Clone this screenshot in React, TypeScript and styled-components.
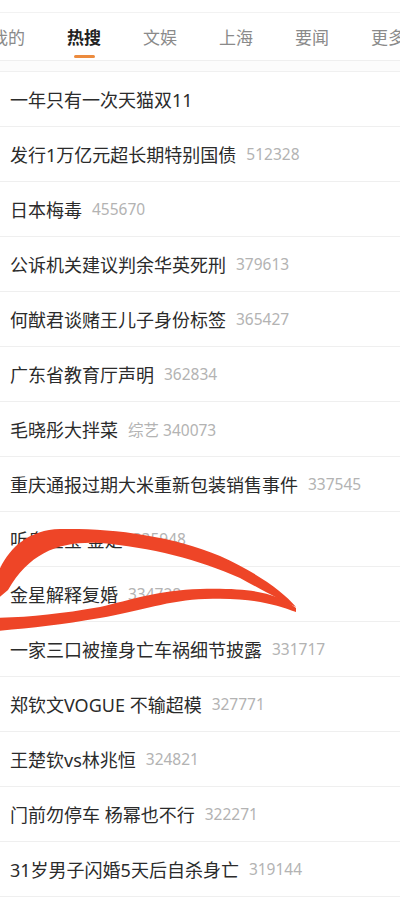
import React from "react";
import styled, { createGlobalStyle } from "styled-components";

const GlobalStyle = createGlobalStyle`
  html, body {
    margin: 0;
    padding: 0;
    background: #ffffff;
  }
  body {
    font-family: "Noto Sans", "Noto Sans CJK SC", sans-serif;
  }
`;

const Page = styled.div`
  position: relative;
  width: 400px;
  height: 902px;
  overflow: hidden;
  background: #fff;
  padding-top: 12px;
  box-sizing: border-box;
`;

const TabBar = styled.div`
  height: 49px;
  box-sizing: border-box;
  border-top: 1px solid #f2f2f2;
  border-bottom: 1px solid #efefef;
  overflow: hidden;
`;

// strip is scrolled a little, so "我的" is cut at the left
const TabStrip = styled.div`
  display: flex;
  margin-left: -30px;
`;

const Tab = styled.div<{ active?: boolean }>`
  width: 76px;
  flex: none;
  display: flex;
  flex-direction: column;
  align-items: center;
  padding-top: 13px;
  gap: 5px;
  font-size: 17px;
  line-height: 24px;
  color: ${(p) => (p.active ? "#222" : "#8a8a8a")};
  font-weight: ${(p) => (p.active ? 700 : 400)};
`;

const Underline = styled.span<{ active?: boolean }>`
  width: 21px;
  height: 3px;
  border-radius: 2px;
  background: ${(p) => (p.active ? "#ec8b3e" : "transparent")};
`;

const Gap = styled.div`
  height: 10px;
  background: #fcfcfc;
  border-bottom: 1px solid #f0f0f0;
`;

const List = styled.div`
  display: flex;
  flex-direction: column;
`;

const Row = styled.div`
  height: 55px;
  box-sizing: border-box;
  border-bottom: 1px solid #efefef;
  display: flex;
  align-items: center;
  padding-left: 10px;
  gap: 10px;
  white-space: nowrap;
`;

const Title = styled.span`
  font-size: 18px;
  color: #2b2b2b;
`;

const Meta = styled.span`
  font-size: 15.5px;
  color: #b3b3b3;
`;

const Scribble = styled.svg`
  position: absolute;
  left: 0;
  top: 0;
  pointer-events: none;
`;

const tabs = ["我的", "热搜", "文娱", "上海", "要闻", "更多"];

const items: { title: string; meta?: string }[] = [
  { title: "一年只有一次天猫双11" },
  { title: "发行1万亿元超长期特别国债", meta: "512328" },
  { title: "日本梅毒", meta: "455670" },
  { title: "公诉机关建议判余华英死刑", meta: "379613" },
  { title: "何猷君谈赌王儿子身份标签", meta: "365427" },
  { title: "广东省教育厅声明", meta: "362834" },
  { title: "毛晓彤大拌菜", meta: "综艺 340073" },
  { title: "重庆通报过期大米重新包装销售事件", meta: "337545" },
  { title: "听泉鉴宝 鉴定", meta: "335948" },
  { title: "金星解释复婚", meta: "334728" },
  { title: "一家三口被撞身亡车祸细节披露", meta: "331717" },
  { title: "郑钦文VOGUE 不输超模", meta: "327771" },
  { title: "王楚钦vs林兆恒", meta: "324821" },
  { title: "门前勿停车 杨幂也不行", meta: "322271" },
  { title: "31岁男子闪婚5天后自杀身亡", meta: "319144" },
];

export default function App() {
  return (
    <Page>
      <GlobalStyle />
      <TabBar>
        <TabStrip>
          {tabs.map((t) => (
            <Tab key={t} active={t === "热搜"}>
              {t}
              <Underline active={t === "热搜"} />
            </Tab>
          ))}
        </TabStrip>
      </TabBar>
      <Gap />
      <List>
        {items.map((it) => (
          <Row key={it.title}>
            <Title>{it.title}</Title>
            {it.meta && <Meta>{it.meta}</Meta>}
          </Row>
        ))}
      </List>

      {/* red marker scribble drawn over the list */}
      <Scribble width="400" height="902" viewBox="0 0 400 902">
        <path
          d="M -4 578 C 5 552, 25 530, 60 529 C 110 528, 170 535, 220 556 C 255 572, 282 590, 296 607 C 284 602, 262 590, 240 578 C 200 560, 150 547, 100 543 C 60 541, 30 552, 8 590 L -4 600 Z"
          fill="#ee4527"
        />
        <path
          d="M 296 608 C 275 592, 250 588, 200 589 C 160 590, 130 600, 100 607 C 60 614, 30 617, -4 618 L -4 631 C 30 628, 60 625, 100 618 C 140 611, 170 600, 205 599 C 250 597, 275 604, 296 612 Z"
          fill="#ee4527"
        />
      </Scribble>
    </Page>
  );
}
